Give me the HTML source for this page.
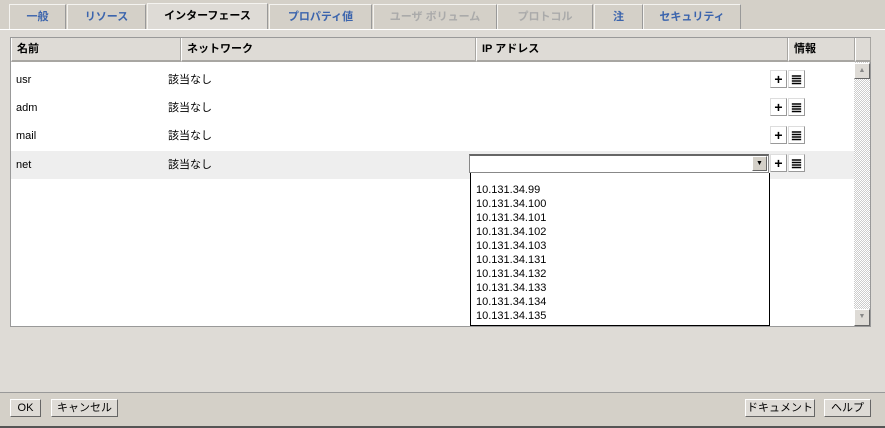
<!DOCTYPE html>
<html><head><meta charset="utf-8"><style>
*{box-sizing:border-box;margin:0;padding:0}
body{width:885px;height:428px;background:#d4d0c8;font-family:"Liberation Sans","Noto Sans CJK JP",sans-serif;font-size:11px;position:relative;overflow:hidden}
.a{position:absolute}
.tab{position:absolute;top:4px;height:25px;background:#d4d0c8;border:1px solid #f4f3f0;border-right-color:#999;border-bottom:none;color:#3b64ad;font-weight:bold;text-align:center;line-height:24px;font-size:11px}
.tab.dis{color:#aaa}
.tab.act{background:#dedbd6;color:#000;top:3px;height:27px}
.panel{left:0;top:29px;width:885px;height:363px;background:#dedbd6;border-top:1px solid #fff}
.tbl{left:10px;top:37px;width:861px;height:290px;background:#fff;border:1px solid #999}
.hd{top:0;height:24px;background:#dedbd6;border-bottom:2px solid #a8a6a2;font-weight:bold;line-height:23px;padding-left:5px;border-right:1px solid #a8a6a2;border-left:1px solid #fff}
.row{left:0;width:843px;height:28px;line-height:28px}
.row span{position:absolute}
.btn{position:absolute;width:17px;height:18px;background:#fff;border:1px solid #ddd;border-right-color:#999;border-bottom-color:#999;text-align:center;font-weight:bold;font-size:14px;line-height:16px}
.ip{position:absolute;left:5px;font-size:11px;line-height:14px}
.fb{position:absolute;top:399px;height:18px;background:#dedbd6;border:1px solid #fff;border-right-color:#666;border-bottom-color:#666;line-height:16px;text-align:center;font-size:11px}
</style></head><body>
<div class="tab" style="left:9px;width:57px">一般</div>
<div class="tab" style="left:67px;width:79px">リソース</div>
<div class="tab act" style="left:147px;width:121px">インターフェース</div>
<div class="tab" style="left:269px;width:103px">プロパティ値</div>
<div class="tab dis" style="left:373px;width:124px">ユーザ ボリューム</div>
<div class="tab dis" style="left:497px;width:96px">プロトコル</div>
<div class="tab" style="left:594px;width:49px">注</div>
<div class="tab" style="left:643px;width:98px">セキュリティ</div>
<div class="a panel"></div>
<div class="a tbl">
 <div class="a hd" style="left:0;width:170px">名前</div>
 <div class="a hd" style="left:170px;width:295px">ネットワーク</div>
 <div class="a hd" style="left:465px;width:312px">IP アドレス</div>
 <div class="a hd" style="left:777px;width:67px">情報</div>
 <div class="a hd" style="left:844px;width:16px"></div>
 <div class="a row" style="top:28px"><span style="left:5px">usr</span><span style="left:157px">該当なし</span></div>
 <div class="a row" style="top:56px"><span style="left:5px">adm</span><span style="left:157px">該当なし</span></div>
 <div class="a row" style="top:84px"><span style="left:5px">mail</span><span style="left:157px">該当なし</span></div>
 <div class="a row" style="top:113px;background:#eee"><span style="left:5px">net</span><span style="left:157px">該当なし</span></div>
 <div class="btn" style="left:759px;top:32px">+</div><div class="btn" style="left:777px;top:32px">≣</div>
 <div class="btn" style="left:759px;top:60px">+</div><div class="btn" style="left:777px;top:60px">≣</div>
 <div class="btn" style="left:759px;top:88px">+</div><div class="btn" style="left:777px;top:88px">≣</div>
 <div class="btn" style="left:759px;top:116px">+</div><div class="btn" style="left:777px;top:116px">≣</div>
 <div class="a" style="left:458px;top:116px;width:300px;height:19px;background:#fff;border:1px solid #888;border-top:2px solid #666">
  <div class="a" style="right:1px;top:0;width:15px;height:15px;background:#d4d0c8;border:1px solid #fff;border-right-color:#666;border-bottom-color:#666;font-size:7px;text-align:center;line-height:13px">▼</div>
 </div>
 <div class="a" style="left:459px;top:135px;width:300px;height:153px;background:#fff;border:1px solid #000;border-top:none">
  <div class="ip" style="top:10px">10.131.34.99</div>
  <div class="ip" style="top:24px">10.131.34.100</div>
  <div class="ip" style="top:38px">10.131.34.101</div>
  <div class="ip" style="top:52px">10.131.34.102</div>
  <div class="ip" style="top:66px">10.131.34.103</div>
  <div class="ip" style="top:80px">10.131.34.131</div>
  <div class="ip" style="top:94px">10.131.34.132</div>
  <div class="ip" style="top:108px">10.131.34.133</div>
  <div class="ip" style="top:122px">10.131.34.134</div>
  <div class="ip" style="top:136px">10.131.34.135</div>
 </div>
 <div class="a" style="left:843px;top:24px;width:16px;height:264px;background:repeating-conic-gradient(#ccc 0 25%,#fff 0 50%) 0 0/2px 2px"></div>
 <div class="a" style="left:843px;top:25px;width:16px;height:16px;background:#dedbd6;border:1px solid #fff;border-right-color:#666;border-bottom-color:#666;font-size:7px;text-align:center;line-height:14px;color:#888">▲</div>
 <div class="a" style="left:843px;top:271px;width:16px;height:17px;background:#dedbd6;border:1px solid #fff;border-right-color:#666;border-bottom-color:#666;font-size:7px;text-align:center;line-height:14px;color:#888">▼</div>
</div>
<div class="a" style="left:0;top:392px;width:885px;height:36px;background:#d4d0c8;border-top:1px solid #999"></div>
<div class="a" style="left:0;top:426px;width:885px;height:2px;background:#555"></div>
<div class="fb" style="left:10px;width:31px">OK</div>
<div class="fb" style="left:51px;width:67px">キャンセル</div>
<div class="fb" style="left:745px;width:70px">ドキュメント</div>
<div class="fb" style="left:824px;width:47px">ヘルプ</div>
</body></html>
